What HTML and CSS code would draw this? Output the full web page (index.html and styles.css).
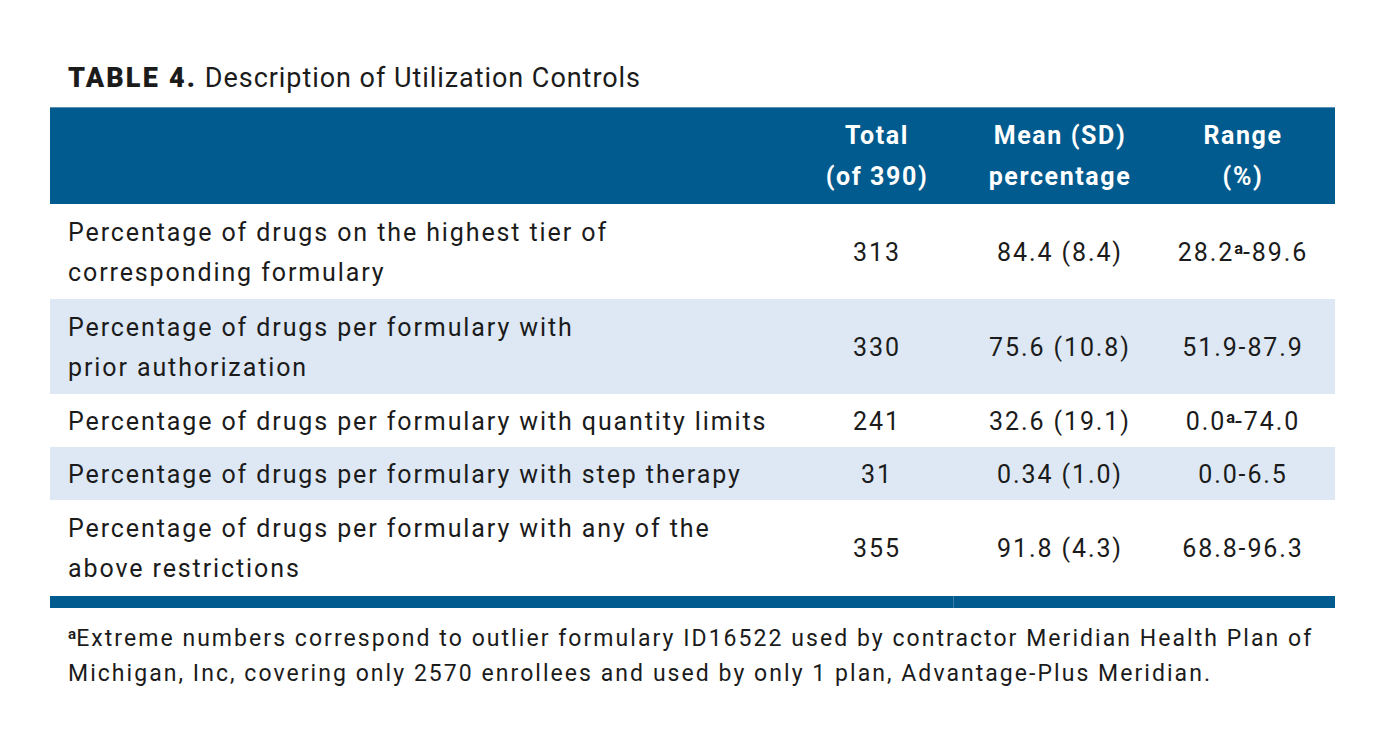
FILE: index.html
```html
<!DOCTYPE html>
<html lang="en">
<head>
<meta charset="utf-8">
<title>Table 4</title>
<link rel="stylesheet" href="styles.css">
</head>
<body>
<div class="page">
  <h1 class="caption"><span class="label">TABLE 4.</span> Description of Utilization Controls</h1>
  <table class="data">
    <colgroup>
      <col class="c-desc">
      <col class="c-total">
      <col class="c-mean">
      <col class="c-range">
    </colgroup>
    <thead>
      <tr>
        <th class="desc"></th>
        <th>Total<br>(of 390)</th>
        <th>Mean (SD)<br>percentage</th>
        <th class="rng">Range<br>(%)</th>
      </tr>
    </thead>
    <tbody>
      <tr class="tall">
        <td class="desc">Percentage of drugs on the highest tier of<br>corresponding formulary</td>
        <td>313</td>
        <td>84.4 (8.4)</td>
        <td class="rng">28.2<sup>a</sup>-89.6</td>
      </tr>
      <tr class="tall alt">
        <td class="desc">Percentage of drugs per formulary with<br>prior authorization</td>
        <td>330</td>
        <td>75.6 (10.8)</td>
        <td class="rng">51.9-87.9</td>
      </tr>
      <tr class="short">
        <td class="desc">Percentage of drugs per formulary with quantity limits</td>
        <td>241</td>
        <td>32.6 (19.1)</td>
        <td class="rng">0.0<sup>a</sup>-74.0</td>
      </tr>
      <tr class="short alt">
        <td class="desc">Percentage of drugs per formulary with step therapy</td>
        <td>31</td>
        <td>0.34 (1.0)</td>
        <td class="rng">0.0-6.5</td>
      </tr>
      <tr class="tall">
        <td class="desc">Percentage of drugs per formulary with any of the<br>above restrictions</td>
        <td>355</td>
        <td>91.8 (4.3)</td>
        <td class="rng">68.8-96.3</td>
      </tr>
    </tbody>
    <tfoot>
      <tr class="bar">
        <td colspan="2"></td>
        <td colspan="2" class="bar-right"></td>
      </tr>
    </tfoot>
  </table>
  <p class="note"><sup>a</sup>Extreme numbers correspond to outlier formulary ID16522 used by contractor Meridian Health Plan of<br>Michigan, Inc, covering only 2570 enrollees and used by only 1 plan, Advantage-Plus Meridian.</p>
</div>
</body>
</html>
```

FILE: styles.css
```css
html, body {
  margin: 0;
  padding: 0;
  background: #ffffff;
}

body {
  font-family: Roboto, "Liberation Sans", sans-serif;
  color: #1b1b1b;
}

.page {
  padding: 63px 50px 0 50px;
  width: 1285px;
}

.caption {
  margin: 0 0 13px 18px;
  font-size: 27px;
  line-height: 31px;
  font-weight: 400;
  letter-spacing: 0.95px;
  color: #1b1b1b;
  white-space: nowrap;
}

.caption .label {
  font-weight: 900;
  letter-spacing: 2.2px;
}

.data {
  width: 1285px;
  border-collapse: collapse;
  border-spacing: 0;
  table-layout: fixed;
}

.c-desc { width: 751px; }
.c-total { width: 152px; }
.c-mean { width: 214px; }
.c-range { width: 168px; }

.data thead th {
  background: #025b8e;
  border-top: 1px solid #5d8fb3;
  color: #ffffff;
  font-size: 25px;
  font-weight: 700;
  letter-spacing: 1.6px;
  line-height: 41px;
  height: 96px;
  padding: 0;
  text-align: center;
  vertical-align: middle;
}

.data td {
  font-size: 25px;
  line-height: 40px;
  letter-spacing: 1.9px;
  padding: 2px 0 0 0;
  text-align: center;
  vertical-align: middle;
  color: #1b1b1b;
}

.data td.desc {
  text-align: left;
  padding-left: 18px;
}

.data .rng {
  padding-right: 16px;
}

.data tr.tall td { height: 93px; }
.data tr.short td { height: 51px; }
.data tr.alt td { background: #dde8f4; }

.data tr.bar td {
  height: 12px;
  padding: 0;
  background: #025b8e;
  border-top: 1px solid #ffffff;
}

.data tr.bar td.bar-right {
  border-left: 1px solid #3f7ba4;
}

sup {
  font-size: 0.66em;
  line-height: 0;
  vertical-align: 0.45em;
  font-weight: 700;
  letter-spacing: 0;
}

.note {
  margin: 13px 0 0 18px;
  font-size: 23px;
  line-height: 35px;
  letter-spacing: 2.05px;
  color: #1b1b1b;
  white-space: nowrap;
}
```
